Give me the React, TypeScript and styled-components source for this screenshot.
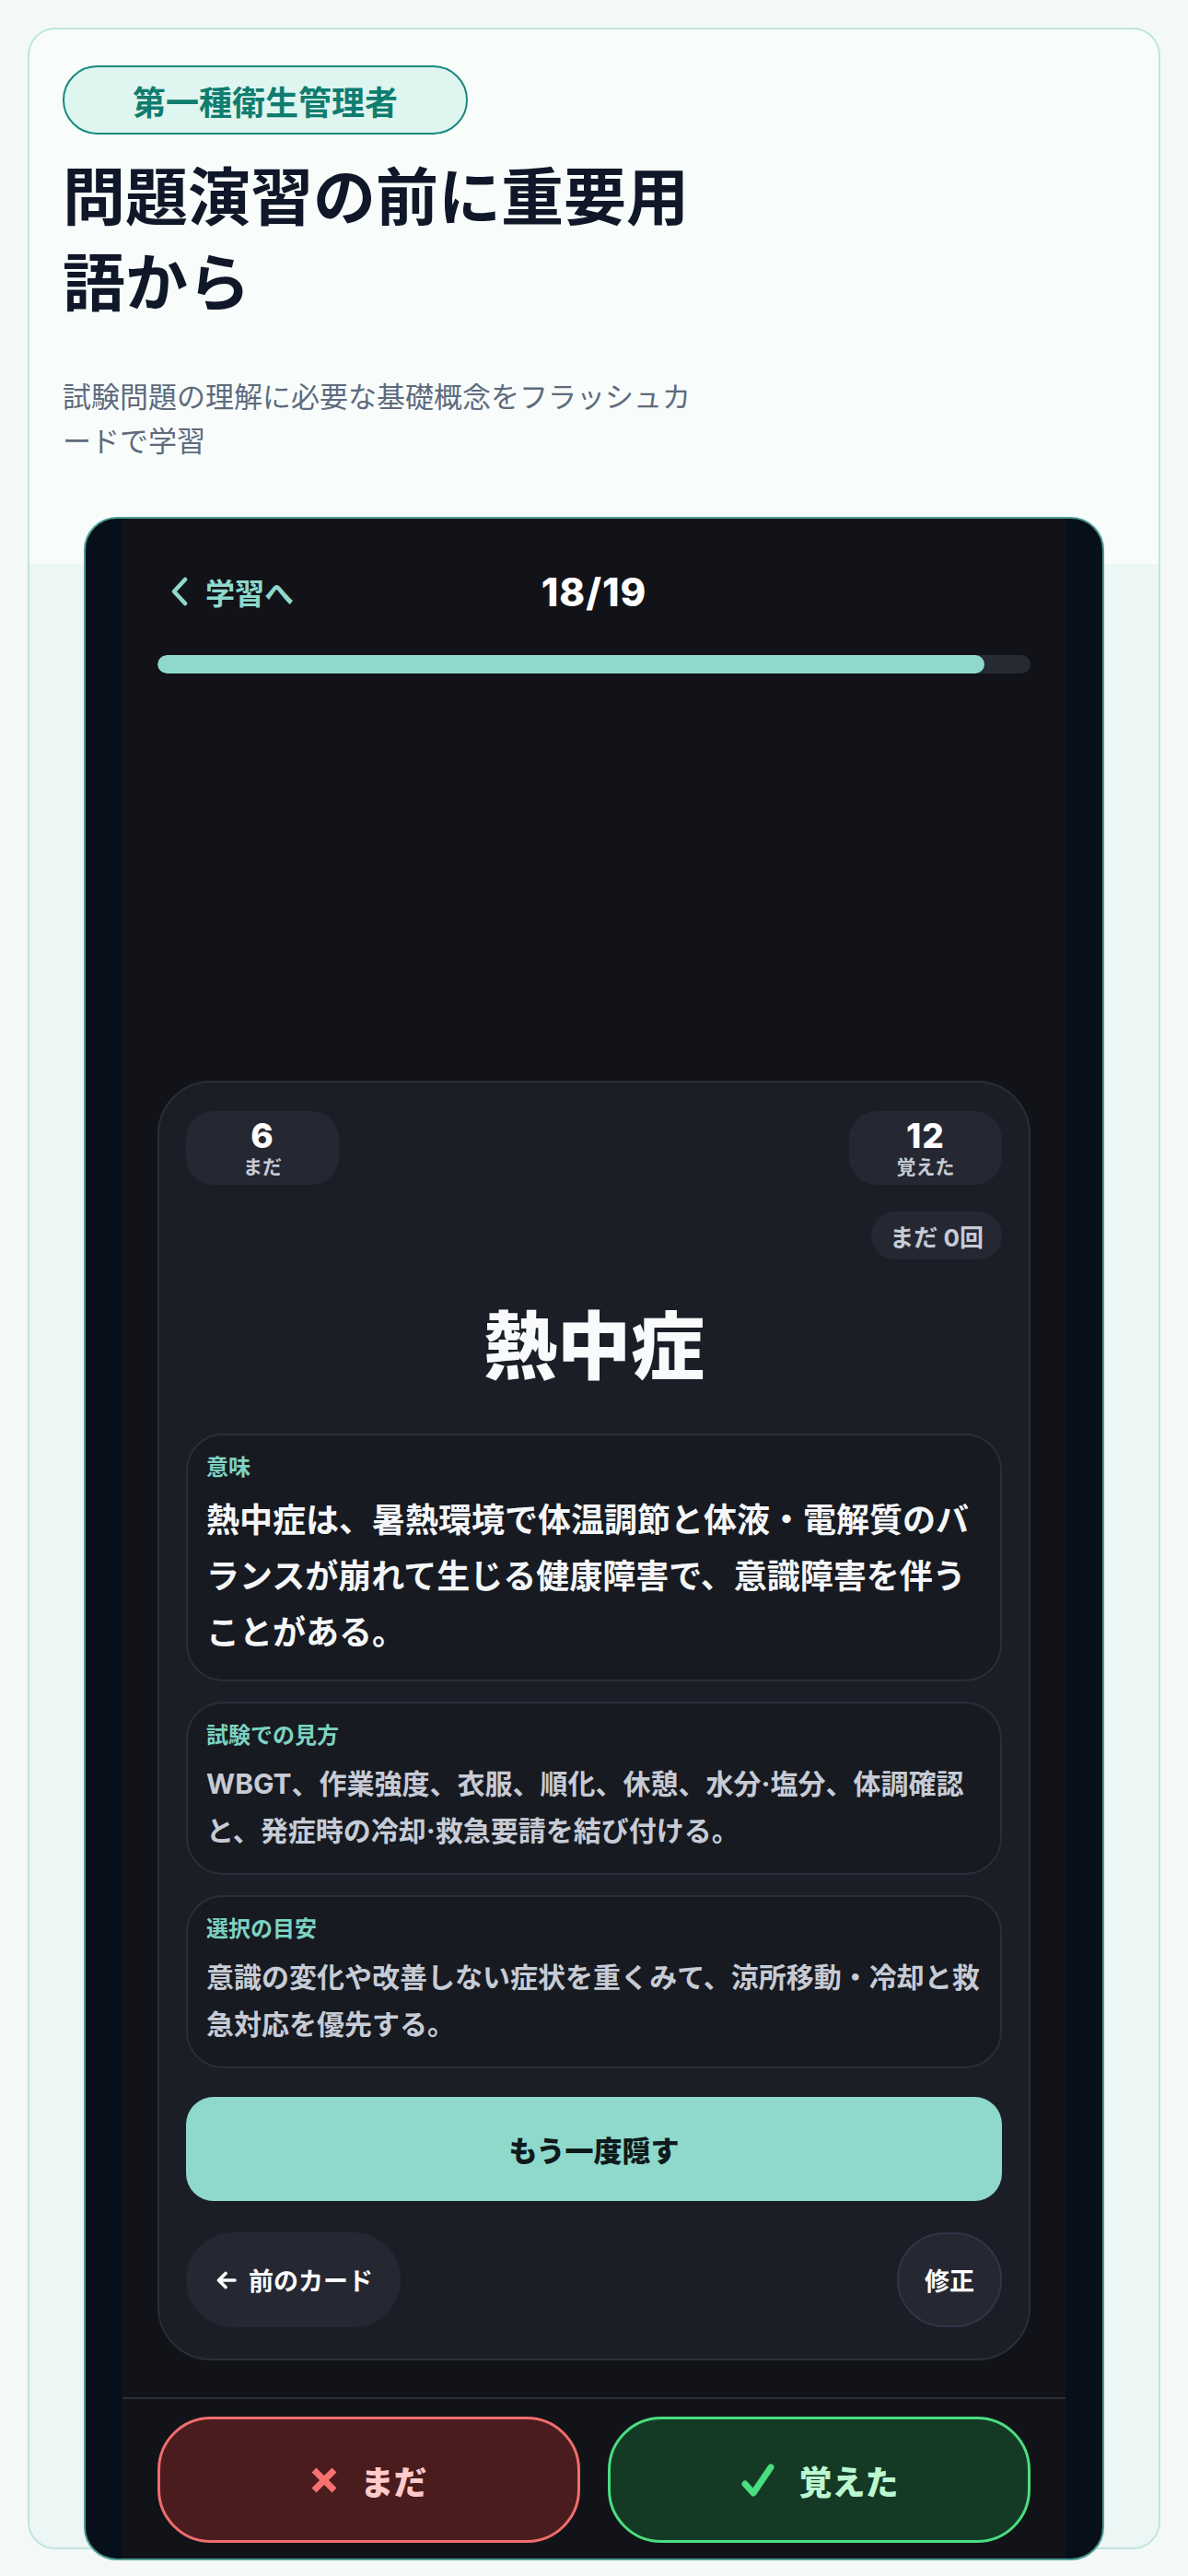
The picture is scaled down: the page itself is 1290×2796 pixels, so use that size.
import React from 'react';
import styled, {createGlobalStyle} from 'styled-components';

const colors = {
    page: '#f4f9f8',
    shell: '#f8fdfc',
    shellBorder: '#bfe4df',
    mint: '#ecf6f4',
    teal: '#0f7d6f',
    ink: '#0f1728',
    muted: '#5f6b7d',
    phoneBorder: '#4d9c94',
    phoneBg: '#07101a',
    screen: '#121318',
    card: '#1b1e26',
    line: '#2a2e3a',
    pill: '#252832',
    box: '#171a21',
    accent: '#8fd8cc',
    label: '#7dd3c1',
    soft: '#c6cbd5',
};

const GlobalStyle = createGlobalStyle`
  html, body {
    margin: 0;
    background: ${colors.page};
  }
  body {
    font-family: Inter, "Noto Sans CJK JP", sans-serif;
    -webkit-font-smoothing: antialiased;
  }
  * {
    box-sizing: border-box;
  }
`;

const Page = styled.div`
  padding: 30px;
`;

const Shell = styled.section`
  border: 2px solid ${colors.shellBorder};
  border-radius: 30px;
  background: ${colors.shell};
`;

const Intro = styled.header`
  padding: 39px 36px 109px;
`;

const Badge = styled.div`
  display: inline-flex;
  align-items: center;
  height: 75px;
  padding: 0 74px;
  border: 2px solid #138a7c;
  border-radius: 999px;
  background: #dff5f0;
  color: ${colors.teal};
  font-size: 36px;
  font-weight: 700;
`;

const Title = styled.h1`
  max-width: 710px;
  margin: 22px 0 0;
  color: ${colors.ink};
  font-size: 68px;
  line-height: 93px;
  font-weight: 700;
`;

const Lead = styled.p`
  max-width: 710px;
  margin: 53px 0 0;
  color: ${colors.muted};
  font-size: 31px;
  line-height: 48px;
  font-weight: 400;
`;

const Preview = styled.div`
  display: flex;
  justify-content: center;
  background: ${colors.mint};
  border-radius: 0 0 28px 28px;
`;

const Phone = styled.div`
  display: flex;
  justify-content: center;
  width: 1108px;
  height: 2218px;
  margin: -51px 0 -14px;
  border: 2px solid ${colors.phoneBorder};
  border-radius: 36px;
  background: ${colors.phoneBg};
  overflow: hidden;
`;

const Screen = styled.div`
  display: flex;
  flex-direction: column;
  width: 1024px;
  background: ${colors.screen};
`;

const TopBar = styled.div`
  padding: 49px 38px 0;
`;

const NavRow = styled.div`
  display: grid;
  grid-template-columns: 1fr auto 1fr;
  align-items: center;
  height: 60px;
`;

const BackLink = styled.a`
  display: flex;
  align-items: center;
  gap: 17px;
  padding-left: 13px;
  color: ${colors.accent};
  font-size: 32px;
  font-weight: 700;
  text-decoration: none;
`;

const Counter = styled.div`
  color: #ffffff;
  font-size: 42px;
  font-weight: 800;
  letter-spacing: 1px;
`;

const Track = styled.div`
  height: 20px;
  margin-top: 39px;
  border-radius: 10px;
  background: #262a33;
  overflow: hidden;
`;

const Fill = styled.div`
  height: 100%;
  border-radius: 10px;
  background: ${colors.accent};
`;

const Stage = styled.div`
  flex: 1;
  display: flex;
  flex-direction: column;
  justify-content: flex-end;
  padding: 0 38px 40px;
`;

const Card = styled.article`
  padding: 31px 29px 34px;
  border: 2px solid ${colors.line};
  border-radius: 58px;
  background: ${colors.card};
`;

const StatsRow = styled.div`
  display: flex;
  justify-content: space-between;
`;

const StatBox = styled.div`
  display: flex;
  flex-direction: column;
  align-items: center;
  justify-content: center;
  width: 166px;
  height: 80px;
  border-radius: 30px;
  background: ${colors.pill};
`;

const StatValue = styled.div`
  color: #ffffff;
  font-size: 37px;
  line-height: 40px;
  font-weight: 800;
  letter-spacing: 1px;
`;

const StatLabel = styled.div`
  color: ${colors.soft};
  font-size: 21px;
  line-height: 27px;
  font-weight: 700;
`;

const ChipRow = styled.div`
  display: flex;
  justify-content: flex-end;
  margin-top: 29px;
`;

const Chip = styled.div`
  display: flex;
  align-items: center;
  height: 52px;
  padding: 0 20px;
  border-radius: 26px;
  background: ${colors.pill};
  color: ${colors.soft};
  font-size: 26px;
  font-weight: 700;
`;

const Term = styled.h2`
  margin: 46px 0 0;
  text-align: center;
  color: #f8fafc;
  font-size: 80px;
  line-height: 96px;
  font-weight: 800;
`;

const InfoList = styled.div`
  display: flex;
  flex-direction: column;
  gap: 22px;
  margin-top: 47px;
`;

const InfoBox = styled.section`
  padding: 17px 20px 20px;
  border: 2px solid ${colors.line};
  border-radius: 40px;
  background: ${colors.box};
`;

const InfoLabel = styled.div`
  color: ${colors.label};
  font-size: 24px;
  line-height: 36px;
  font-weight: 700;
`;

const InfoText = styled.p<{ $lead?: boolean }>`
  margin: 9px 0 0;
  color: ${p => (p.$lead ? '#f4f6f8' : colors.soft)};
  font-size: ${p => (p.$lead ? '36px' : '30px')};
  line-height: ${p => (p.$lead ? '61px' : '51px')};
  font-weight: 700;
`;

const HideButton = styled.button`
  display: block;
  width: 100%;
  height: 113px;
  margin-top: 31px;
  border: none;
  border-radius: 30px;
  background: ${colors.accent};
  color: #0e1a1b;
  font-family: inherit;
  font-size: 31px;
  font-weight: 800;
`;

const BottomRow = styled.div`
  display: flex;
  justify-content: space-between;
  align-items: center;
  margin-top: 34px;
`;

const GhostButton = styled.button<{ $outlined?: boolean }>`
  display: flex;
  align-items: center;
  justify-content: center;
  gap: 12px;
  height: 103px;
  min-width: 113px;
  padding: 0 ${p => (p.$outlined ? '28px' : '28px 0 30px')};
  border: 2px solid ${p => (p.$outlined ? '#30354a' : colors.pill)};
  border-radius: 999px;
  background: ${colors.pill};
  color: #ffffff;
  font-family: inherit;
  font-size: 27px;
  font-weight: 700;
`;

const Footer = styled.footer`
  display: grid;
  grid-template-columns: 1fr 1fr;
  gap: 30px;
  padding: 19px 38px 17px;
  border-top: 2px solid #2a2e38;
`;

const tones = {
    miss: {bg: '#4a1c1e', border: '#f06d6d', text: '#fecaca'},
    hit: {bg: '#143a26', border: '#4ade80', text: '#bbf7d0'},
};

const AnswerButton = styled.button<{ $tone: keyof typeof tones }>`
  display: flex;
  align-items: center;
  justify-content: center;
  gap: 24px;
  height: 137px;
  border: 3px solid ${p => tones[p.$tone].border};
  border-radius: 58px;
  background: ${p => tones[p.$tone].bg};
  color: ${p => tones[p.$tone].text};
  font-family: inherit;
  font-size: 36px;
  font-weight: 800;
`;

const ChevronIcon = () => (
    <svg width="22" height="32" viewBox="0 0 22 32" fill="none">
        <polyline points="17,3 5,16 17,29" stroke={colors.accent} strokeWidth="4.5"
                  strokeLinecap="round" strokeLinejoin="round"/>
    </svg>
);

const ArrowIcon = () => (
    <svg width="24" height="24" viewBox="0 0 24 24" fill="none">
        <path d="M21 12H4M11 4.5L3.5 12L11 19.5" stroke="#ffffff" strokeWidth="3.6"
              strokeLinecap="round" strokeLinejoin="round"/>
    </svg>
);

const CrossIcon = () => (
    <svg width="30" height="30" viewBox="0 0 30 30" fill="none">
        <path d="M4 4L26 26M26 4L4 26" stroke="#f87171" strokeWidth="7"/>
    </svg>
);

const CheckIcon = () => (
    <svg width="40" height="40" viewBox="0 0 40 40" fill="none">
        <path d="M6 24L15 34L34 6" stroke="#4ade80" strokeWidth="7"
              strokeLinecap="round" strokeLinejoin="round"/>
    </svg>
);

const details = [
    {
        label: '意味',
        text: '熱中症は、暑熱環境で体温調節と体液・電解質のバランスが崩れて生じる健康障害で、意識障害を伴うことがある。',
        lead: true,
    },
    {
        label: '試験での見方',
        text: 'WBGT、作業強度、衣服、順化、休憩、水分·塩分、体調確認と、発症時の冷却·救急要請を結び付ける。',
    },
    {
        label: '選択の目安',
        text: '意識の変化や改善しない症状を重くみて、涼所移動・冷却と救急対応を優先する。',
    },
];

const App: React.FC = () => {
    const current = 18;
    const total = 19;

    return (
        <>
            <GlobalStyle/>
            <Page>
                <Shell>
                    <Intro>
                        <Badge>第一種衛生管理者</Badge>
                        <Title>問題演習の前に重要用語から</Title>
                        <Lead>試験問題の理解に必要な基礎概念をフラッシュカードで学習</Lead>
                    </Intro>
                    <Preview>
                        <Phone>
                            <Screen>
                                <TopBar>
                                    <NavRow>
                                        <BackLink>
                                            <ChevronIcon/>
                                            学習へ
                                        </BackLink>
                                        <Counter>{current}/{total}</Counter>
                                        <span/>
                                    </NavRow>
                                    <Track>
                                        <Fill style={{width: `${(current / total) * 100}%`}}/>
                                    </Track>
                                </TopBar>
                                <Stage>
                                    <Card>
                                        <StatsRow>
                                            <StatBox>
                                                <StatValue>6</StatValue>
                                                <StatLabel>まだ</StatLabel>
                                            </StatBox>
                                            <StatBox>
                                                <StatValue>12</StatValue>
                                                <StatLabel>覚えた</StatLabel>
                                            </StatBox>
                                        </StatsRow>
                                        <ChipRow>
                                            <Chip>まだ 0回</Chip>
                                        </ChipRow>
                                        <Term>熱中症</Term>
                                        <InfoList>
                                            {details.map(item => (
                                                <InfoBox key={item.label}>
                                                    <InfoLabel>{item.label}</InfoLabel>
                                                    <InfoText $lead={item.lead}>{item.text}</InfoText>
                                                </InfoBox>
                                            ))}
                                        </InfoList>
                                        <HideButton>もう一度隠す</HideButton>
                                        <BottomRow>
                                            <GhostButton>
                                                <ArrowIcon/>
                                                前のカード
                                            </GhostButton>
                                            <GhostButton $outlined>修正</GhostButton>
                                        </BottomRow>
                                    </Card>
                                </Stage>
                                <Footer>
                                    <AnswerButton $tone="miss">
                                        <CrossIcon/>
                                        まだ
                                    </AnswerButton>
                                    <AnswerButton $tone="hit">
                                        <CheckIcon/>
                                        覚えた
                                    </AnswerButton>
                                </Footer>
                            </Screen>
                        </Phone>
                    </Preview>
                </Shell>
            </Page>
        </>
    );
};

export default App;
